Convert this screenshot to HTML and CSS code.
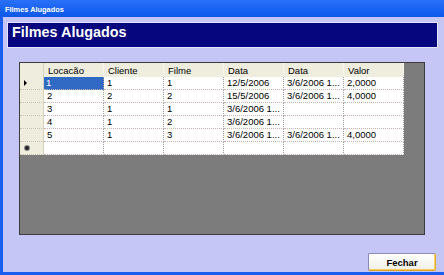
FILE: index.html
```html
<!DOCTYPE html>
<html lang="pt">
<head>
  <meta charset="UTF-8">
  <title>Filmes Alugados</title>
  <link rel="stylesheet" href="styles.css">
</head>
<body>

  <div class="window">
    <div class="titlebar">Filmes Alugados</div>

    <div class="client">
      <div class="banner">Filmes Alugados</div>

      <div class="grid">
        <div class="rows">
          <div class="row head">
            <div class="rh"></div>
            <div class="cell">Locacão</div>
            <div class="cell">Cliente</div>
            <div class="cell">Filme</div>
            <div class="cell">Data</div>
            <div class="cell">Data</div>
            <div class="cell">Valor</div>
          </div>
          <div class="row">
            <div class="rh"><span class="arrow"></span></div>
            <div class="cell selected">1</div>
            <div class="cell">1</div>
            <div class="cell">1</div>
            <div class="cell">12/5/2006</div>
            <div class="cell">3/6/2006 1...</div>
            <div class="cell">2,0000</div>
          </div>
          <div class="row">
            <div class="rh"></div>
            <div class="cell">2</div>
            <div class="cell">2</div>
            <div class="cell">2</div>
            <div class="cell">15/5/2006</div>
            <div class="cell">3/6/2006 1...</div>
            <div class="cell">4,0000</div>
          </div>
          <div class="row">
            <div class="rh"></div>
            <div class="cell">3</div>
            <div class="cell">1</div>
            <div class="cell">1</div>
            <div class="cell">3/6/2006 1...</div>
            <div class="cell"></div>
            <div class="cell"></div>
          </div>
          <div class="row">
            <div class="rh"></div>
            <div class="cell">4</div>
            <div class="cell">1</div>
            <div class="cell">2</div>
            <div class="cell">3/6/2006 1...</div>
            <div class="cell"></div>
            <div class="cell"></div>
          </div>
          <div class="row">
            <div class="rh"></div>
            <div class="cell">5</div>
            <div class="cell">1</div>
            <div class="cell">3</div>
            <div class="cell">3/6/2006 1...</div>
            <div class="cell">3/6/2006 1...</div>
            <div class="cell">4,0000</div>
          </div>
          <div class="row">
            <div class="rh"><span class="star"></span></div>
            <div class="cell"></div>
            <div class="cell"></div>
            <div class="cell"></div>
            <div class="cell"></div>
            <div class="cell"></div>
            <div class="cell"></div>
          </div>
        </div>
      </div>

      <div class="buttons">
        <button>Fechar</button>
      </div>
    </div>
  </div>

</body>
</html>
```

FILE: styles.css
```css
body {
  margin: 0;
  padding: 0;
  width: 444px;
  height: 275px;
  overflow: hidden;
  font-family: "Liberation Sans", Arial, sans-serif;
  background: #c6c6f6;
}
.window {
  height: 275px;
  box-sizing: border-box;
  border-left: 3px solid #1a5ef0;
  border-bottom: 3px solid #1a5ef0;
  background: #c6c6f6;
}
.titlebar {
  height: 17px;
  box-sizing: border-box;
  margin-left: -3px;
  padding: 2px 0 0 5px;
  line-height: 15px;
  font-size: 7.4px;
  font-weight: bold;
  color: #fff;
  background: linear-gradient(#2a70f8, #0a58ec);
}
.client {
  padding: 5px 6px 0 4px;
}
.banner {
  height: 24px;
  border: 1px solid #e4e4ff;
  background: #06067e;
  color: #fff;
  font-size: 14.4px;
  font-weight: bold;
  line-height: 18px;
  padding-left: 4px;
}
.grid {
  margin: 14px 0 0 12px;
  width: 406px;
  height: 173px;
  box-sizing: border-box;
  border: 1px solid #3c3c3c;
  background: #7c7c7c;
}
.rows {
  width: 384px;
}
.row {
  display: grid;
  grid-template-columns: 24px repeat(6, 60px);
  height: 13px;
  background: #fff;
  font-size: 9.5px;
  color: #000;
}
.row.head {
  height: 14px;
  background: #efedde;
}
.cell, .rh {
  box-sizing: border-box;
  border-right: 1px dotted #a09a9a;
  border-bottom: 1px dotted #c8b4b4;
  padding: 0 0 0 3px;
  line-height: 12px;
  white-space: nowrap;
  overflow: hidden;
}
.head .cell {
  padding-top: 1px;
  line-height: 13px;
  padding-left: 4px;
  border-right-color: #fff;
  border-bottom: none;
}
.rh {
  background: #efedde;
  border-right: 1px solid #d6d2bc;
  border-bottom-color: #c8c4b0;
  position: relative;
}
.head .rh {
  border-bottom: none;
}
.cell.selected {
  background: #316ac5;
  color: #fff;
  padding-left: 2px;
}
.arrow {
  position: absolute;
  left: 4px;
  top: 3px;
  width: 0;
  height: 0;
  border-top: 3px solid transparent;
  border-bottom: 3px solid transparent;
  border-left: 3px solid #000;
}
.star {
  position: absolute;
  left: 5px;
  top: 4px;
  width: 4px;
  height: 4px;
  border-radius: 50%;
  background: #222;
  box-shadow: 0 0 0 1px #888;
}
.buttons {
  display: flex;
  justify-content: flex-end;
  margin-top: 18px;
  padding-right: 2px;
}
button {
  width: 68px;
  height: 18px;
  padding: 0;
  font-family: "Liberation Sans", Arial, sans-serif;
  font-size: 9.5px;
  font-weight: bold;
  color: #000;
  background: linear-gradient(#ffffff, #f0efe6);
  border: 1px solid #8a8ab8;
  border-right-color: #e8b030;
  border-bottom-color: #e0a020;
  box-shadow: inset 0 -1px 0 #f8d060, inset -1px 0 0 #f8d060;
  border-radius: 2px;
}
```
